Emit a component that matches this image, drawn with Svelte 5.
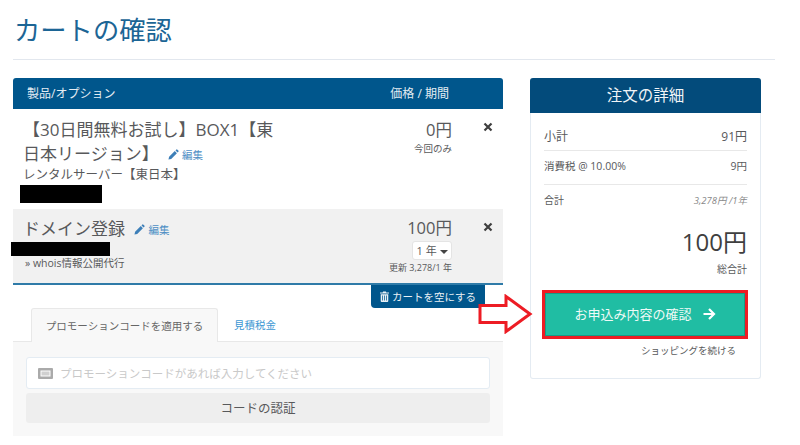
<script lang="ts">
  // カート確認ページ
  const promoPlaceholder = 'プロモーションコードがあれば入力してください';
</script>

<div class="page">
  <header class="page-title">
    <h1>カートの確認</h1>
  </header>

  <div class="columns">
    <section class="cart">
      <div class="cart-head">
        <span>製品/オプション</span>
        <span class="head-price">価格 / 期間</span>
      </div>

      <div class="item first">
        <div class="item-info">
          <div class="item-name">【30日間無料お試し】BOX1【東<br />日本リージョン】 <a class="edit"><svg viewBox="0 0 12 12" class="pencil"><path d="M0.5 11.5l0.7-3 6.2-6.2 2.3 2.3-6.2 6.2zM8.2 1.5l1-1q0.4-0.3 0.8 0l1.5 1.5q0.3 0.4 0 0.8l-1 1z" /></svg>編集</a></div>
          <div class="item-group">レンタルサーバー【東日本】</div>
          <div class="redact redact-one"></div>
        </div>
        <div class="item-price">
          <div class="amount">0円</div>
          <div class="cycle">今回のみ</div>
        </div>
        <div class="remove"><svg viewBox="0 0 10 10"><path d="M1.5 1.5l7 7M8.5 1.5l-7 7" /></svg></div>
      </div>

      <div class="item second">
        <div class="item-info">
          <div class="item-name">ドメイン登録 <a class="edit"><svg viewBox="0 0 12 12" class="pencil"><path d="M0.5 11.5l0.7-3 6.2-6.2 2.3 2.3-6.2 6.2zM8.2 1.5l1-1q0.4-0.3 0.8 0l1.5 1.5q0.3 0.4 0 0.8l-1 1z" /></svg>編集</a></div>
          <div class="redact redact-two"></div>
          <div class="addon">» whois情報公開代行</div>
        </div>
        <div class="item-price">
          <div class="amount">100円</div>
          <div class="period">1 年 <i class="caret"></i></div>
          <div class="renew">更新 3,278/1 年</div>
        </div>
        <div class="remove"><svg viewBox="0 0 10 10"><path d="M1.5 1.5l7 7M8.5 1.5l-7 7" /></svg></div>
      </div>

      <div class="empty-row">
        <button class="empty-btn">
          <svg viewBox="0 0 10 12" class="trash"><path d="M3.5 0.5h3l0.5 1h3v1.2h-10v-1.2h3zM0.8 3.4h8.4v7.6q0 1-1 1h-6.4q-1 0-1-1zM2.5 4.8v5.6h0.8v-5.6zM4.6 4.8v5.6h0.8v-5.6zM6.7 4.8v5.6h0.8v-5.6z" fill-rule="evenodd" /></svg>
          カートを空にする
        </button>
      </div>

      <div class="tabs">
        <div class="tab active">プロモーションコードを適用する</div>
        <div class="tab">見積税金</div>
      </div>
      <div class="tab-body">
        <div class="promo-input">
          <svg viewBox="0 0 15 11" class="ticket"><path d="M1 0h13q1 0 1 1v9q0 1-1 1h-13q-1 0-1-1v-9q0-1 1-1zM2.5 2.5v6h10v-6z" fill-rule="evenodd" /><rect x="3.5" y="3.5" width="8" height="4" opacity="0.55" /></svg>
          <span>{promoPlaceholder}</span>
        </div>
        <button class="validate">コードの認証</button>
      </div>
    </section>

    <aside class="summary">
      <div class="summary-head">注文の詳細</div>
      <div class="summary-body">
        <div class="line big"><span>小計</span><span>91円</span></div>
        <div class="line small"><span>消費税 @ 10.00%</span><span>9円</span></div>
        <div class="line total"><span>合計</span><em>3,278円 /1年</em></div>
        <div class="grand">100円</div>
        <div class="grand-label">総合計</div>
        <button class="checkout">お申込み内容の確認
          <svg viewBox="0 0 14 14" class="arrow"><path d="M1.5 7h10M7 2l5 5-5 5" /></svg>
        </button>
        <div class="continue">ショッピングを続ける</div>
      </div>
    </aside>
  </div>

  <svg class="callout" viewBox="0 0 56 40">
    <path d="M2 11.5h26v-9l24 17.500-24 17.500v-9h-26z" />
  </svg>
</div>

<style>
  :global(body) {
    margin: 0;
    background: #fff;
  }

  .page {
    position: relative;
    width: 800px;
    height: 445px;
    overflow: hidden;
    box-sizing: border-box;
    padding: 0 25px 0 13px;
    font-family: "Open Sans", "Noto Sans CJK JP", sans-serif;
    color: #58595b;
  }

  .page-title {
    height: 59px;
    border-bottom: 1px solid #e2e7ee;
    margin-bottom: 18px;
  }

  h1 {
    margin: 0;
    padding: 12px 0 0 1px;
    font-size: 26.300px;
    line-height: 36px;
    font-weight: 400;
    color: #1c6595;
  }

  .columns {
    display: grid;
    grid-template-columns: 490px 231px;
    column-gap: 27px;
    align-items: start;
  }

  .cart-head {
    display: flex;
    justify-content: space-between;
    height: 31px;
    padding: 0 54px 2px 14px;
    box-sizing: border-box;
    align-items: center;
    background: #00568c;
    color: #e4edf3;
    font-size: 12px;
    border-radius: 3px 3px 0 0;
  }

  .item {
    display: flex;
    box-sizing: border-box;
  }

  .item.first {
    height: 100px;
    padding: 9px 0 0 10px;
  }

  .item.second {
    height: 76px;
    padding: 6px 0 0 10px;
    background: #f1f1f1;
    border-bottom: 2px solid #2f7ba8;
  }

  .item-info {
    flex: 1;
  }

  .item-name {
    font-size: 17px;
    line-height: 24px;
    color: #58595b;
    white-space: nowrap;
  }

  .second .item-name {
    margin-top: 2px;
  }

  .edit {
    margin-left: 5px;
    font-size: 10.500px;
    vertical-align: 1px;
    color: #4d8ec4;
  }

  .pencil {
    width: 11px;
    height: 11px;
    margin-right: 3px;
    vertical-align: -1px;
    fill: #3d7fb8;
  }

  .item-group {
    margin-top: -1px;
    font-size: 12.500px;
    line-height: 17px;
  }

  .redact {
    background: #000;
  }

  .redact-one {
    width: 82px;
    height: 18px;
    margin: 2px 0 0 -3px;
  }

  .redact-two {
    width: 99px;
    height: 14px;
    margin: 0 0 0 -12px;
  }

  .addon {
    font-size: 10.500px;
    line-height: 14px;
    margin: 0 0 0 2px;
  }

  .item-price {
    width: 110px;
    text-align: right;
    display: flex;
    flex-direction: column;
    align-items: flex-end;
  }

  .amount {
    font-size: 16.500px;
    line-height: 26px;
  }

  .first .amount {
    margin-top: -1px;
  }

  .cycle {
    font-size: 9.500px;
    line-height: 12px;
  }

  .period {
    box-sizing: border-box;
    width: 40px;
    height: 19px;
    border: 1px solid #e4e4e4;
    border-radius: 3px;
    background: #fff;
    font-size: 11px;
    line-height: 17px;
    text-align: center;
  }

  .caret {
    display: inline-block;
    border: 4px solid transparent;
    border-top-color: #444;
    border-bottom: 0;
    vertical-align: 1px;
  }

  .renew {
    font-size: 9px;
    line-height: 12px;
    margin-top: 2px;
  }

  .remove {
    width: 51px;
    box-sizing: border-box;
    padding-left: 31px;
  }

  .remove svg {
    display: block;
    width: 10px;
    height: 10px;
    fill: none;
    stroke: #3f3f3f;
    stroke-width: 2.200;
  }

  .first .remove svg {
    margin-top: 4px;
  }

  .second .remove svg {
    margin-top: 7px;
  }

  .empty-row {
    display: flex;
    justify-content: flex-end;
    padding-right: 18px;
    height: 23px;
  }

  .empty-btn {
    display: flex;
    align-items: center;
    justify-content: center;
    gap: 3px;
    width: 114px;
    height: 23px;
    padding: 0;
    border: 0;
    border-radius: 0 0 4px 4px;
    background: #00568c;
    color: #e8f0f5;
    font: inherit;
    font-size: 10.500px;
  }

  .trash {
    width: 9px;
    height: 11px;
    fill: #e8f0f5;
  }

  .tabs {
    display: flex;
    height: 34px;
    padding-left: 18px;
    border-bottom: 1px solid #e8e8e8;
    box-sizing: border-box;
  }

  .tab {
    font-size: 10.500px;
    line-height: 34px;
    padding: 0 16px;
    color: #3d97d3;
  }

  .tab.active {
    box-sizing: border-box;
    width: 187px;
    height: 34px;
    padding: 0;
    text-align: center;
    color: #666;
    background: #f8f8f8;
    border: 1px solid #e8e8e8;
    border-bottom: 0;
    border-radius: 3px 3px 0 0;
  }

  .tab-body {
    height: 94px;
    box-sizing: border-box;
    padding: 15px 13px 0;
    background: #f8f8f8;
  }

  .promo-input {
    display: flex;
    align-items: center;
    box-sizing: border-box;
    height: 32px;
    padding-left: 11px;
    background: #fff;
    border: 1px solid #e4ecf3;
    border-radius: 3px;
    font-size: 11.500px;
    color: #c9c9c9;
  }

  .ticket {
    width: 15px;
    height: 11px;
    margin-right: 7px;
    fill: #aaa;
  }

  .validate {
    display: block;
    width: 100%;
    height: 30px;
    margin-top: 4px;
    padding: 0 0 2px;
    border: 0;
    border-radius: 3px;
    background: #eeeeee;
    color: #58595b;
    font: inherit;
    font-size: 12.500px;
  }

  .summary {
    height: 301px;
    box-sizing: border-box;
    border: 1px solid #e4ebf2;
    border-top: 0;
    border-radius: 3px;
  }

  .summary-head {
    margin: 0 -1px;
    height: 35px;
    background: #034b7b;
    color: #f0f4f7;
    font-size: 15.500px;
    line-height: 35px;
    text-align: center;
    border-radius: 3px 3px 0 0;
  }

  .summary-body {
    padding: 0 13px;
  }

  .line {
    display: flex;
    justify-content: space-between;
    align-items: center;
    box-sizing: border-box;
    height: 34px;
    border-bottom: 1px solid #e8e8e8;
  }

  .line.big {
    height: 38px;
    padding-top: 8px;
    font-size: 12px;
  }

  .line.small {
    padding-bottom: 4px;
    font-size: 10.500px;
  }

  .line.total {
    border: 0;
    padding-bottom: 2px;
    font-size: 10px;
    height: 31px;
  }

  .line em {
    font-size: 9.500px;
    color: #8a8a8a;
  }

  .grand {
    margin-top: 8px;
    text-align: right;
    font-size: 24px;
    line-height: 36px;
    color: #3f3f3f;
  }

  .grand-label {
    margin-top: 3px;
    text-align: right;
    font-size: 10px;
    line-height: 12px;
  }

  .checkout {
    display: flex;
    align-items: center;
    justify-content: center;
    gap: 10px;
    box-sizing: border-box;
    width: 206px;
    height: 49px;
    margin: 15px 0 0 -2px;
    padding: 0 0 2px;
    border: 3px solid #ed1c24;
    background: #20bda3;
    box-shadow: inset 0 0 0 1px #179a85;
    color: #eefaf7;
    font: inherit;
    font-size: 13px;
  }

  .arrow {
    width: 14px;
    height: 14px;
    fill: none;
    stroke: #fff;
    stroke-width: 2.200;
  }

  .continue {
    margin-top: 6px;
    text-align: right;
    padding-right: 11px;
    font-size: 9.500px;
    line-height: 12px;
  }

  .callout {
    position: absolute;
    left: 478px;
    top: 294px;
    width: 56px;
    height: 40px;
    fill: #fff;
    stroke: #ed1c24;
    stroke-width: 3;
  }
</style>
